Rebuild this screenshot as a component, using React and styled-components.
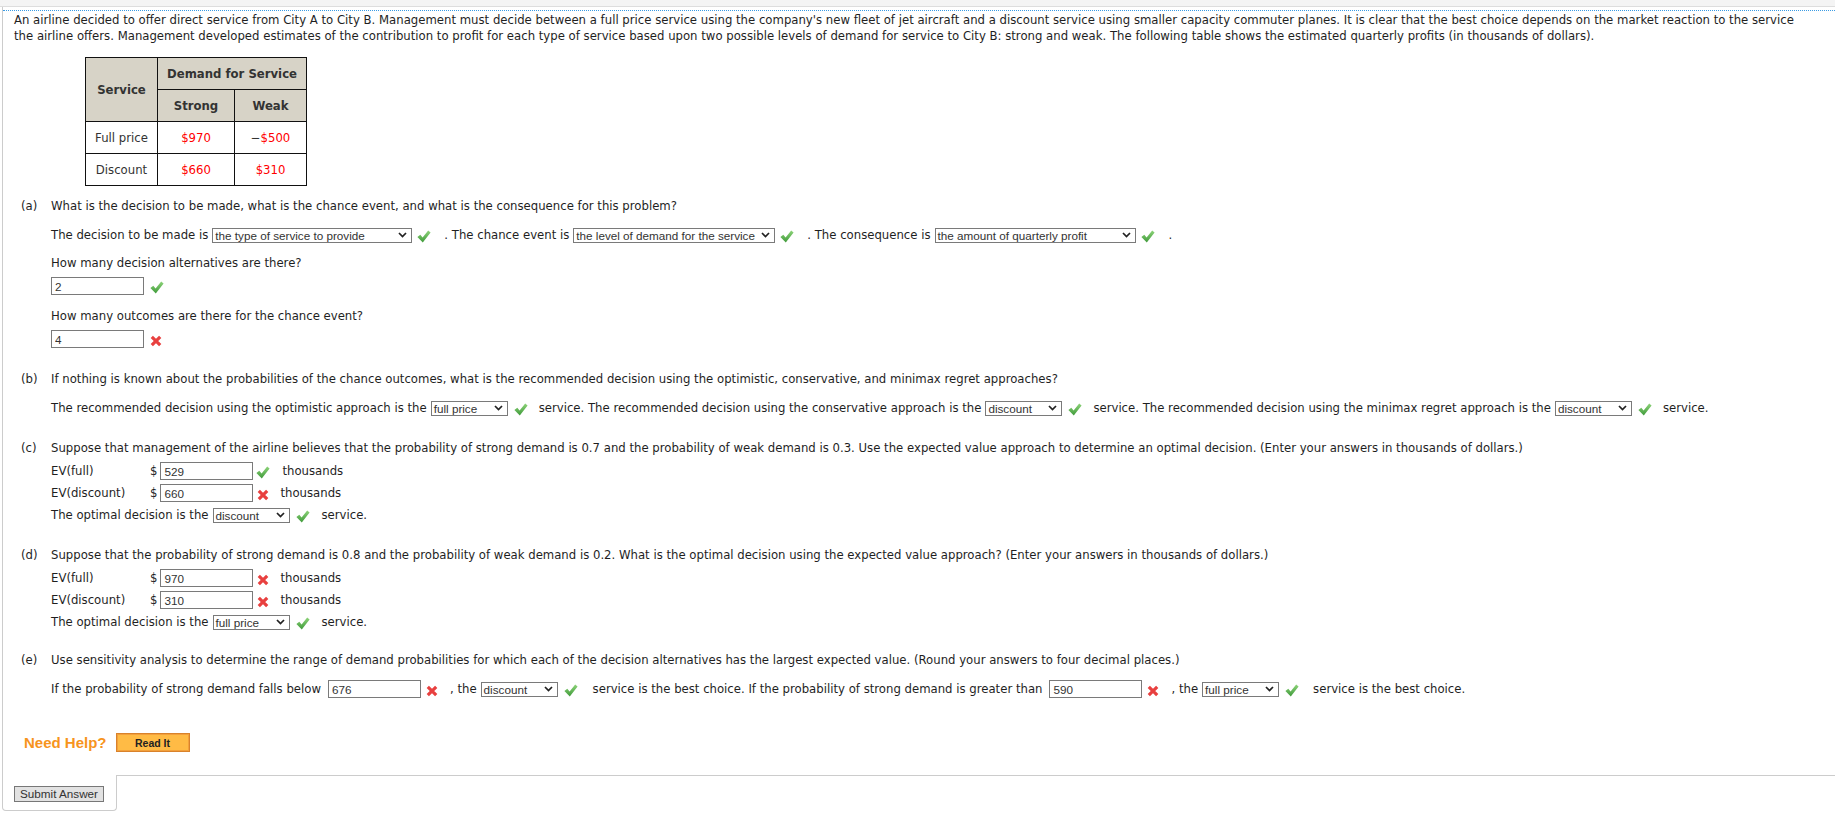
import React from 'react';
import styled, { createGlobalStyle } from 'styled-components';

const GlobalStyle = createGlobalStyle`
  html, body { margin: 0; padding: 0; background: #fff; }
  body {
    font-family: "DejaVu Sans", Verdana, sans-serif;
    font-size: 11.7px;
    color: #1f1f1f;
  }
`;

const Page = styled.div`
  width: 1835px;
  min-height: 815px;
  background: #fff;
`;

const TopBand = styled.div`
  height: 6px;
  background: #f4f4f4;
  border-bottom: 1px solid #dddddd;
`;

const Frame = styled.div`
  margin-left: 2px;
`;

const Content = styled.div`
  border-left: 1px solid #cccccc;
  padding-top: 3px;
`;

const Sheet = styled.div`
  border-top: 1px dotted #3b9be3;
  padding: 1px 20px 23px 11px;
`;

const Intro = styled.p`
  margin: 0;
  line-height: 16px;
`;

const Table = styled.table`
  border-collapse: collapse;
  margin: 13px 0 0 71px;
`;

const Th = styled.th`
  background: #d7d3c7;
  border: 1px solid #111;
  height: 31px;
  padding: 0;
  width: ${(p) => (p.$w ? `${p.$w}px` : 'auto')};
  font-weight: bold;
  color: #333;
  text-align: center;
`;

const Td = styled.td`
  border: 1px solid #111;
  height: 31px;
  padding: 0;
  text-align: center;
  color: #333;
`;

const Money = styled.span`
  color: #f00;
`;

const Part = styled.section`
  display: grid;
  grid-template-columns: 30px 1fr;
  padding-left: 7px;
  margin-top: ${(p) => p.$mt}px;
  line-height: 16px;
`;

const PartLabel = styled.div``;

const PartBody = styled.div`
  display: flex;
  flex-direction: column;
  align-items: flex-start;
`;

const Line = styled.div`
  display: flex;
  align-items: center;
  white-space: nowrap;
  height: ${(p) => p.$h || 16}px;
  margin-top: ${(p) => p.$mt || 0}px;
`;

const EvLabel = styled.span`
  width: 99px;
`;

const Field = styled.input`
  box-sizing: border-box;
  width: 93px;
  height: 18px;
  margin: 0 0 0 ${(p) => p.$ml || 0}px;
  padding: 0 3px;
  border: 1px solid #7a7a7a;
  background: #fff;
  font-family: "Liberation Sans", Arial, sans-serif;
  font-size: 11.7px;
  color: #333;
  outline: none;
`;

const Select = styled.span`
  display: inline-flex;
  align-items: center;
  justify-content: space-between;
  box-sizing: border-box;
  width: ${(p) => p.$w}px;
  height: 15px;
  margin-left: 4px;
  padding: 0 4px 0 2px;
  border: 1px solid #7a7a7a;
  background: #fff;
  font-family: "Liberation Sans", Arial, sans-serif;
  font-size: 11.7px;
  line-height: 13px;
  color: #333;
`;

const Mark = styled.span`
  display: inline-flex;
  margin-left: ${(p) => p.$ml ?? 5}px;
  margin-right: ${(p) => p.$mr ?? 12}px;
  margin-top: 3px;
`;

const HelpRow = styled.div`
  display: flex;
  align-items: center;
  height: 19px;
  margin: 34px 0 0 10px;
`;

const HelpText = styled.span`
  font-family: "Liberation Sans", Arial, sans-serif;
  font-weight: bold;
  font-size: 15px;
  color: #f7941d;
`;

const ReadIt = styled.button`
  box-sizing: border-box;
  width: 74px;
  height: 19px;
  margin-left: 9px;
  padding: 0;
  background: #ffbb45;
  border: 1px solid #d9822b;
  box-shadow: inset 0 0 0 1px #f2a03c;
  font-family: "Liberation Sans", Arial, sans-serif;
  font-weight: bold;
  font-size: 10.5px;
  color: #222;
`;

const Footer = styled.div`
  display: flex;
`;

const SubmitTab = styled.div`
  box-sizing: border-box;
  width: 115px;
  padding: 11px 0 8px 11px;
  border: 1px solid #cccccc;
  border-top: none;
  border-radius: 0 0 4px 4px;
`;

const Filler = styled.div`
  flex: 1;
  border-top: 1px solid #cccccc;
`;

const SubmitButton = styled.button`
  display: block;
  box-sizing: border-box;
  width: 90px;
  height: 16px;
  padding: 0;
  background: #e2e2e2;
  border: 1px solid #777;
  font-family: "Liberation Sans", Arial, sans-serif;
  font-size: 11.7px;
  line-height: 14px;
  color: #333;
`;

const Chevron = () => (
  <svg width="9" height="6" viewBox="0 0 9 6" aria-hidden="true">
    <polyline points="1,1 4.5,4.6 8,1" fill="none" stroke="#222" strokeWidth="1.7" />
  </svg>
);

const CheckIcon = () => (
  <svg width="14" height="13" viewBox="0 0 14 13" aria-hidden="true">
    <defs>
      <linearGradient id="chkg" x1="0" y1="0" x2="0" y2="1">
        <stop offset="0" stopColor="#8ed47a" />
        <stop offset="1" stopColor="#3f9a3a" />
      </linearGradient>
    </defs>
    <path d="M0.4 7 L3.3 4.7 L5.6 7.5 L11.2 0.5 L13.6 2.5 L5.8 12.5 Z" fill="url(#chkg)" />
  </svg>
);

const CrossIcon = () => (
  <svg width="12" height="12" viewBox="0 0 12 12" aria-hidden="true">
    <path d="M1.8 1.8 L10.2 10.2 M10.2 1.8 L1.8 10.2" stroke="#e8403f" strokeWidth="3.2" />
  </svg>
);

const Dropdown = ({ w, children }) => (
  <Select $w={w} role="combobox">
    <span>{children}</span>
    <Chevron />
  </Select>
);

const Ok = (props) => (
  <Mark {...props}>
    <CheckIcon />
  </Mark>
);

const Bad = (props) => (
  <Mark {...props}>
    <CrossIcon />
  </Mark>
);

export default function App() {
  return (
    <Page>
      <GlobalStyle />
      <TopBand />
      <Frame>
        <Content>
          <Sheet>
            <Intro>
              An airline decided to offer direct service from City A to City B. Management must decide between a full price service using the company's new fleet of jet aircraft and a discount service using smaller capacity commuter planes. It is clear that the best choice depends on the market reaction to the service the airline offers. Management developed estimates of the contribution to profit for each type of service based upon two possible levels of demand for service to City B: strong and weak. The following table shows the estimated quarterly profits (in thousands of dollars).
            </Intro>

            <Table>
              <thead>
                <tr>
                  <Th rowSpan={2} $w={71}>Service</Th>
                  <Th colSpan={2}>Demand for Service</Th>
                </tr>
                <tr>
                  <Th $w={76}>Strong</Th>
                  <Th $w={71}>Weak</Th>
                </tr>
              </thead>
              <tbody>
                <tr>
                  <Td>Full price</Td>
                  <Td><Money>$970</Money></Td>
                  <Td>−<Money>$500</Money></Td>
                </tr>
                <tr>
                  <Td>Discount</Td>
                  <Td><Money>$660</Money></Td>
                  <Td><Money>$310</Money></Td>
                </tr>
              </tbody>
            </Table>

            <Part $mt={12}>
              <PartLabel>(a)</PartLabel>
              <PartBody>
                <Line>What is the decision to be made, what is the chance event, and what is the consequence for this problem?</Line>
                <Line $mt={13}>
                  The decision to be made is
                  <Dropdown w={200}>the type of service to provide</Dropdown>
                  <Ok $mr={13} />
                  . The chance event is
                  <Dropdown w={202}>the level of demand for the service</Dropdown>
                  <Ok $mr={13} />
                  . The consequence is
                  <Dropdown w={201}>the amount of quarterly profit</Dropdown>
                  <Ok $mr={14} />
                  .
                </Line>
                <Line $mt={12}>How many decision alternatives are there?</Line>
                <Line $mt={6} $h={18}>
                  <Field readOnly value="2" />
                  <Ok $ml={6} />
                </Line>
                <Line $mt={13}>How many outcomes are there for the chance event?</Line>
                <Line $mt={6} $h={18}>
                  <Field readOnly value="4" />
                  <Bad $ml={6} />
                </Line>
              </PartBody>
            </Part>

            <Part $mt={23}>
              <PartLabel>(b)</PartLabel>
              <PartBody>
                <Line>If nothing is known about the probabilities of the chance outcomes, what is the recommended decision using the optimistic, conservative, and minimax regret approaches?</Line>
                <Line $mt={13}>
                  The recommended decision using the optimistic approach is the
                  <Dropdown w={77}>full price</Dropdown>
                  <Ok $ml={6} $mr={11} />
                  service. The recommended decision using the conservative approach is the
                  <Dropdown w={77}>discount</Dropdown>
                  <Ok $ml={6} $mr={11} />
                  service. The recommended decision using the minimax regret approach is the
                  <Dropdown w={77}>discount</Dropdown>
                  <Ok $ml={6} $mr={11} />
                  service.
                </Line>
              </PartBody>
            </Part>

            <Part $mt={24}>
              <PartLabel>(c)</PartLabel>
              <PartBody>
                <Line>Suppose that management of the airline believes that the probability of strong demand is 0.7 and the probability of weak demand is 0.3. Use the expected value approach to determine an optimal decision. (Enter your answers in thousands of dollars.)</Line>
                <Line $mt={4} $h={22}>
                  <EvLabel>EV(full)</EvLabel>$
                  <Field $ml={3} readOnly value="529" />
                  <Ok $ml={3} />
                  thousands
                </Line>
                <Line $h={22}>
                  <EvLabel>EV(discount)</EvLabel>$
                  <Field $ml={3} readOnly value="660" />
                  <Bad $ml={4} $mr={11} />
                  thousands
                </Line>
                <Line $h={22}>
                  The optimal decision is the
                  <Dropdown w={77}>discount</Dropdown>
                  <Ok $ml={6} />
                  service.
                </Line>
              </PartBody>
            </Part>

            <Part $mt={21}>
              <PartLabel>(d)</PartLabel>
              <PartBody>
                <Line>Suppose that the probability of strong demand is 0.8 and the probability of weak demand is 0.2. What is the optimal decision using the expected value approach? (Enter your answers in thousands of dollars.)</Line>
                <Line $mt={4} $h={22}>
                  <EvLabel>EV(full)</EvLabel>$
                  <Field $ml={3} readOnly value="970" />
                  <Bad $ml={4} $mr={11} />
                  thousands
                </Line>
                <Line $h={22}>
                  <EvLabel>EV(discount)</EvLabel>$
                  <Field $ml={3} readOnly value="310" />
                  <Bad $ml={4} $mr={11} />
                  thousands
                </Line>
                <Line $h={22}>
                  The optimal decision is the
                  <Dropdown w={77}>full price</Dropdown>
                  <Ok $ml={6} />
                  service.
                </Line>
              </PartBody>
            </Part>

            <Part $mt={19}>
              <PartLabel>(e)</PartLabel>
              <PartBody>
                <Line>Use sensitivity analysis to determine the range of demand probabilities for which each of the decision alternatives has the largest expected value. (Round your answers to four decimal places.)</Line>
                <Line $mt={11} $h={20}>
                  If the probability of strong demand falls below
                  <Field $ml={7} readOnly value="676" />
                  <Bad $ml={5} $mr={12} />
                  , the
                  <Dropdown w={77}>discount</Dropdown>
                  <Ok $ml={6} $mr={15} />
                  service is the best choice. If the probability of strong demand is greater than
                  <Field $ml={7} readOnly value="590" />
                  <Bad $ml={5} $mr={12} />
                  , the
                  <Dropdown w={77}>full price</Dropdown>
                  <Ok $ml={6} $mr={14} />
                  service is the best choice.
                </Line>
              </PartBody>
            </Part>

            <HelpRow>
              <HelpText>Need Help?</HelpText>
              <ReadIt type="button">Read It</ReadIt>
            </HelpRow>
          </Sheet>
        </Content>
        <Footer>
          <SubmitTab>
            <SubmitButton type="button">Submit Answer</SubmitButton>
          </SubmitTab>
          <Filler />
        </Footer>
      </Frame>
    </Page>
  );
}
